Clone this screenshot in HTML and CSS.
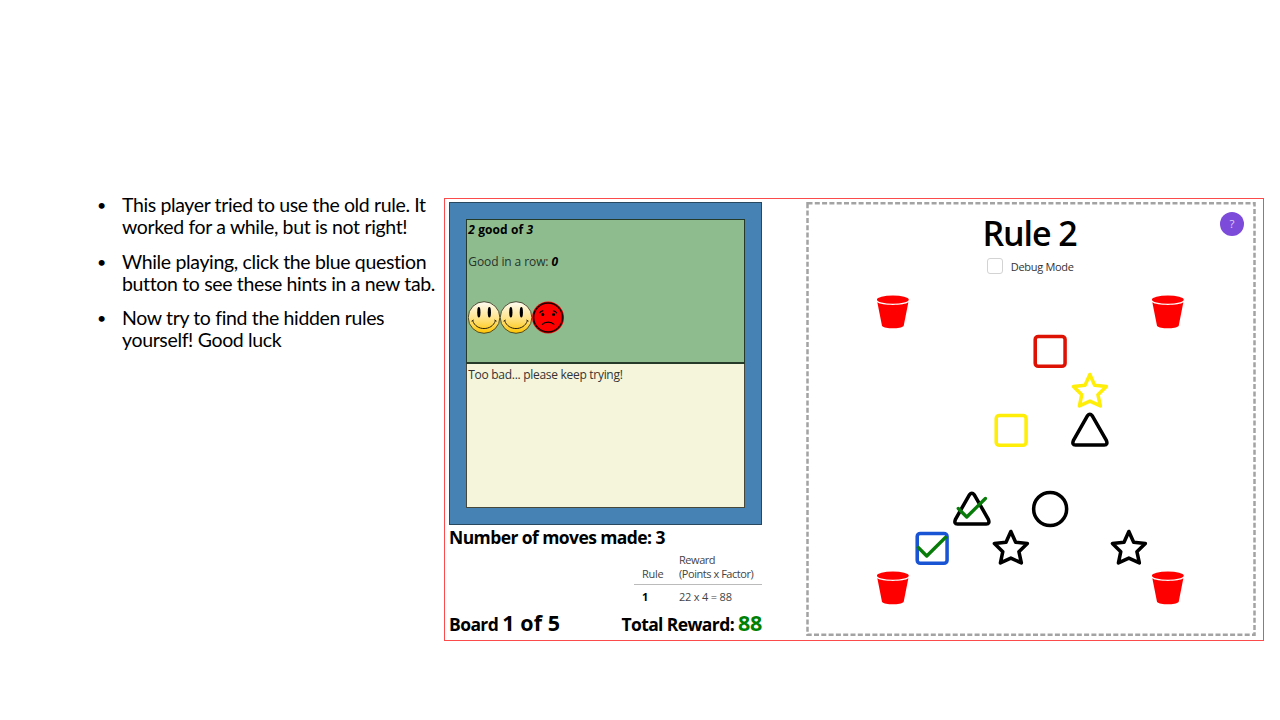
FILE: index.html
```html
<!DOCTYPE html>
<html lang="en">
<head>
<meta charset="utf-8">
<title>Rule 2</title>
<link rel="stylesheet" href="styles.css">
</head>
<body>
<svg class="defs" aria-hidden="true">
  <defs>
    <linearGradient id="smile-fill" x1="0" y1="0" x2="0" y2="1">
      <stop offset="0" stop-color="#fffdf5"/>
      <stop offset=".5" stop-color="#ffe590"/>
      <stop offset="1" stop-color="#ffc400"/>
    </linearGradient>
    <symbol id="smile" viewBox="0 0 32 33">
      <circle cx="16" cy="16.5" r="15.8" fill="url(#smile-fill)" stroke="#3d3d25" stroke-width=".9"/>
      <ellipse cx="10.8" cy="11.2" rx="1.6" ry="5.3"/>
      <ellipse cx="21.3" cy="11.2" rx="1.6" ry="5.3"/>
      <path d="M4.6 19.6C8 30.2 24 30.2 27.4 19.6M3.5 20.2l2.2-1.2M28.5 20.2l-2.2-1.2" fill="none" stroke="#2b2413" stroke-width="1"/>
    </symbol>
    <symbol id="frown" viewBox="0 0 32 33">
      <circle cx="16" cy="16.5" r="16" fill="#f00"/>
      <circle cx="16" cy="16.5" r="14.5" fill="none" stroke="#1c0000" stroke-width="1.6"/>
      <circle cx="10.7" cy="13.5" r="1.5"/>
      <circle cx="21.5" cy="13.5" r="1.5"/>
      <path d="M7.3 12.2c.8-1.4 2.200-2.300 3.900-2.600M24.800 12.200c-.8-1.4-2.200-2.300-3.900-2.600M10 23.600c3-3.200 9.200-3.200 12.200 0" fill="none" stroke="#000" stroke-width="1.3"/>
    </symbol>
    <symbol id="bucket" viewBox="0 0 40 40">
      <ellipse cx="20.200" cy="7.800" rx="16.200" ry="4.200"/>
      <path d="M4.400 10.500C8.200 14.100 32.200 14.100 36 10.500L31.200 34.500C28.200 37.600 12.200 37.600 9.200 34.500Z"/>
    </symbol>
    <symbol id="square" viewBox="0 0 40 40"><rect x="5.300" y="5.500" width="30.400" height="30.400" rx="3.200"/></symbol>
    <symbol id="circle" viewBox="0 0 40 40"><circle cx="20.500" cy="20.300" r="16.800"/></symbol>
    <symbol id="triangle" viewBox="0 0 40 40"><path d="M17.700 5.900Q20.200 2.800 22.700 5.900L37 30.800Q38.800 35.700 34.900 35.700H5.600Q1.700 35.700 3.500 30.800Z"/></symbol>
    <symbol id="star" viewBox="0 0 40 40"><path d="M20.200 3.500L25.100 14.400L37 15.700L28.400 24.100L30.900 35.500L20.200 30.600L9.600 35.500L12 24.100L3.500 15.700L15.300 14.400Z"/></symbol>
    <symbol id="check" viewBox="0 0 40 40"><path d="M6.400 19.800L15 28.500L34 9.600"/></symbol>
  </defs>
</svg>
<main class="slide">
  <ul class="hints">
    <li><span class="h1">This player tried to use the old rule. It</span><br><span>worked for a while, but is not right!</span></li>
    <li><span>While playing, click the blue question</span><br><span>button to see these hints in a new tab.</span></li>
    <li><span>Now try to find the hidden rules</span><br><span>yourself! Good luck</span></li>
  </ul>
  <section class="game">
    <div class="status">
      <div class="panel">
        <div class="progress">
          <p class="score"><i>2</i> good of <i>3</i></p>
          <p class="streak">Good in a row: <b><i>0</i></b></p>
          <div class="faces">
            <svg><use href="#smile"/></svg><svg><use href="#smile"/></svg><svg><use href="#frown"/></svg>
          </div>
        </div>
        <div class="message">Too bad... please keep trying!</div>
      </div>
      <p class="moves">Number of moves made: 3</p>
      <table class="rewards">
        <thead><tr><th>Rule</th><th class="points">Reward<br>(Points x Factor)</th></tr></thead>
        <tbody><tr><td><b>1</b></td><td class="points sum">22 x 4 = 88</td></tr></tbody>
      </table>
      <div class="totals">
        <p>Board <span class="big">1 of 5</span></p>
        <p>Total Reward: <span class="big green">88</span></p>
      </div>
    </div>
    <div class="board">
      <svg class="dashes"><rect x="1.500" y="1.300" width="447" height="431.500"/></svg>
      <span class="help">?</span>
      <h1>Rule 2</h1>
      <label class="debug"><span class="box"></span><span>Debug Mode</span></label>
      <div class="pieces">
        <svg class="c1 r1 bucket"><use href="#bucket"/></svg>
        <svg class="c8 r1 bucket"><use href="#bucket"/></svg>
        <svg class="c5 r2 red"><use href="#square"/></svg>
        <svg class="c6 r3 yellow"><use href="#star"/></svg>
        <svg class="c4 r4 yellow"><use href="#square"/></svg>
        <svg class="c6 r4"><use href="#triangle"/></svg>
        <svg class="c3 r6"><use href="#triangle"/><use class="check" href="#check"/></svg>
        <svg class="c5 r6"><use href="#circle"/></svg>
        <svg class="c2 r7 blue"><use href="#square"/><use class="check" href="#check"/></svg>
        <svg class="c4 r7"><use href="#star"/></svg>
        <svg class="c7 r7"><use href="#star"/></svg>
        <svg class="c1 r8 bucket"><use href="#bucket"/></svg>
        <svg class="c8 r8 bucket"><use href="#bucket"/></svg>
      </div>
    </div>
  </section>
</main>
</body>
</html>
```
FILE: styles.css
```css
* { box-sizing: border-box; }
body { margin: 0; background: #fff; color: #000; overflow: hidden; font-family: "Open Sans", "Noto Sans", sans-serif; }
p, h1, ul { margin: 0; }
.defs { position: absolute; width: 0; height: 0; }
.slide { width: 1280px; height: 720px; display: flex; align-items: flex-start; padding: 198px 16px 0 98px; }

.hints { width: 346px; flex: none; padding: 0; margin-top: -4px; list-style: none; font-family: Lato, sans-serif; font-size: 19.500px; line-height: 22px; letter-spacing: -.35px; white-space: nowrap; }
.hints li { padding-left: 24px; margin-bottom: 12.500px; }
.hints li::before { content: "•"; float: left; margin-left: -25px; width: 24px; font-size: 16px; }
.hints .h1 { letter-spacing: -.375px; }

.game { width: 820px; height: 443px; flex: none; display: flex; justify-content: space-between; border: 1px solid #fb4b4b; padding: 3px 8px 0 4px; }
.status { width: 313px; white-space: nowrap; }
.panel { height: 323px; border: 1px solid #28485f; background: #4682b4; padding: 16px 16px 16px; display: flex; flex-direction: column; }
.progress { height: 145px; border: 1px solid #263a29; border-bottom-width: 2px; background: #8fbc8f; padding-left: 1.300px; font-size: 12px; line-height: 16px; }
.score { font-weight: 700; padding-top: 2px; letter-spacing: .08px; }
.streak { padding-top: 16px; color: #26332a; letter-spacing: -.1px; }
.streak b { color: #000; }
.faces { display: flex; margin-top: 31px; }
.faces svg { width: 32.100px; height: 33px; }
.message { flex: 1; border: 1px solid #47483a; border-top: 0; background: #f5f5dc; padding: 3px 1.300px; font-size: 12px; line-height: 16px; letter-spacing: -.29px; color: #333; }
.moves { font-size: 17.500px; font-weight: 700; line-height: 24px; letter-spacing: -.58px; }
.rewards { width: 128px; margin: 4px 0 0 auto; border-collapse: collapse; font-size: 11px; line-height: 14px; letter-spacing: -.45px; color: #444; }
.rewards th { font-weight: 400; text-align: left; vertical-align: bottom; padding: 0 0 3px 8px; border-bottom: 1px solid #bbb; }
.rewards th:first-child { letter-spacing: -.3px; }
.rewards td { padding: 5px 0 1px 8px; }
.rewards .sum { letter-spacing: -.2px; }
.rewards b { color: #000; }
.rewards .points { width: 91px; }
.totals { display: flex; justify-content: space-between; align-items: baseline; font-size: 17.500px; font-weight: 700; line-height: 28px; letter-spacing: -.6px; margin-top: 4px; }
.big { font-size: 21.500px; letter-spacing: .1px; }
.green { color: #008000; letter-spacing: -.3px; }

.board { position: relative; width: 450px; height: 435px; margin-right: -1px; display: flex; flex-direction: column; align-items: center; padding-top: 10px; }
.dashes { position: absolute; inset: 0; width: 450px; height: 435px; fill: none; stroke: #a3a3a3; stroke-width: 2.500; stroke-dasharray: 5 2.300; }
.help { position: absolute; right: 12px; top: 10px; width: 24px; height: 24px; border-radius: 50%; background: #7c4bda; color: #ded3f6; font-size: 11.500px; line-height: 24px; text-align: center; }
h1 { font-size: 34px; font-weight: 600; line-height: 43px; letter-spacing: -1.100px; padding-right: 3px; white-space: nowrap; }
.debug { display: flex; align-items: center; gap: 8px; height: 22px; padding-right: 1.500px; font-size: 11px; letter-spacing: -.3px; color: #333; white-space: nowrap; }
.box { width: 16px; height: 16px; border: 1px solid #d3d3d3; border-radius: 3px; }
.pieces { display: grid; grid-template: repeat(8, 39.370px) / repeat(8, 39.300px); margin: 15px 1.600px 0 0; }
.pieces svg { width: 39.300px; height: 39.370px; fill: none; stroke: #000; stroke-width: 3.600; stroke-linejoin: round; stroke-linecap: round; }
.pieces .bucket { fill: #f00; stroke: none; }
.pieces .red { stroke: #de1204; }
.pieces .yellow { stroke: #ffee08; }
.pieces .blue { stroke: #1854d4; }
.check { stroke: #087c08; stroke-width: 3.400; }
.c1 { grid-column: 1; } .c2 { grid-column: 2; } .c3 { grid-column: 3; } .c4 { grid-column: 4; }
.c5 { grid-column: 5; } .c6 { grid-column: 6; } .c7 { grid-column: 7; } .c8 { grid-column: 8; }
.r1 { grid-row: 1; } .r2 { grid-row: 2; } .r3 { grid-row: 3; } .r4 { grid-row: 4; }
.r6 { grid-row: 6; } .r7 { grid-row: 7; } .r8 { grid-row: 8; }
```
